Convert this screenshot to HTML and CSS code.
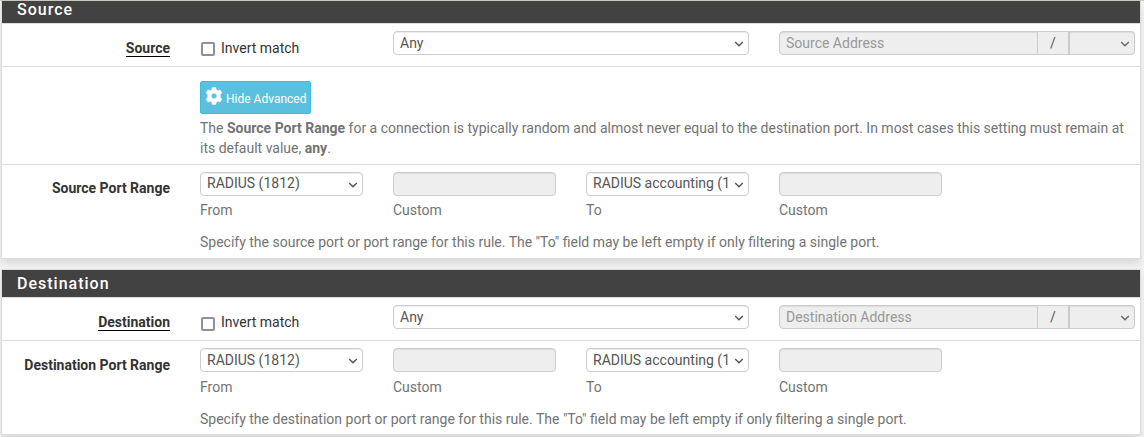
FILE: index.html
```
<!DOCTYPE html>
<html lang="en">
<head>
<meta charset="utf-8">
<title>Firewall rule</title>
<link rel="stylesheet" href="styles.css">
</head>
<body>
<svg class="defs" width="0" height="0"><symbol id="chev" viewBox="0 0 10 8"><path d="M1.2 2 5 5.8 8.8 2" fill="none" stroke="currentColor" stroke-width="1.4"/></symbol></svg>
<main>
<section class="panel source">
  <h2>Source</h2>
  <div class="row match">
    <div class="label"><span class="underlined">Source</span></div>
    <label class="check"><input type="checkbox"><span>Invert match</span></label>
    <div class="control wide"><span>Any</span><svg><use href="#chev"/></svg></div>
    <div class="group">
      <div class="control disabled address"><span>Source Address</span></div>
      <div class="slash">/</div>
      <div class="control disabled mask"><svg><use href="#chev"/></svg></div>
    </div>
  </div>
  <div class="row advanced">
    <div class="full">
      <button class="info"><svg viewBox="0 0 18 18"><path fill="currentColor" fill-rule="evenodd" d="M7.2.5h3.6l.5 2.3 1.5.9 2.3-.8 1.8 3.1-1.7 1.6v2.8l1.7 1.6-1.8 3.1-2.3-.8-1.5.9-.5 2.3H7.2l-.5-2.3-1.5-.9-2.3.8L1.1 12l1.7-1.6V7.6L1.1 6l1.8-3.1 2.3.8 1.5-.9ZM9 6.2a2.8 2.8 0 1 0 0 5.6 2.8 2.8 0 0 0 0-5.6Z" stroke="currentColor" stroke-width=".5" stroke-linejoin="round"/></svg><span>Hide Advanced</span></button>
      <p>The <b>Source Port Range</b> for a connection is typically random and almost never equal to the destination port. In most cases this setting must remain at its default value, <b>any</b>.</p>
    </div>
  </div>
  <div class="row ports">
    <div class="label">Source Port Range</div>
    <div><div class="control raised"><span>RADIUS (1812)</span><svg><use href="#chev"/></svg></div><div class="help">From</div></div>
    <div><div class="control disabled"></div><div class="help">Custom</div></div>
    <div><div class="control raised"><span>RADIUS accounting (1</span><svg><use href="#chev"/></svg></div><div class="help">To</div></div>
    <div><div class="control disabled"></div><div class="help">Custom</div></div>
    <div class="full note">Specify the source port or port range for this rule. The "To" field may be left empty if only filtering a single port.</div>
  </div>
</section>
<section class="panel destination">
  <h2>Destination</h2>
  <div class="row match">
    <div class="label"><span class="underlined">Destination</span></div>
    <label class="check"><input type="checkbox"><span>Invert match</span></label>
    <div class="control wide"><span>Any</span><svg><use href="#chev"/></svg></div>
    <div class="group">
      <div class="control disabled address"><span>Destination Address</span></div>
      <div class="slash">/</div>
      <div class="control disabled mask"><svg><use href="#chev"/></svg></div>
    </div>
  </div>
  <div class="row ports">
    <div class="label">Destination Port Range</div>
    <div><div class="control"><span>RADIUS (1812)</span><svg><use href="#chev"/></svg></div><div class="help">From</div></div>
    <div><div class="control disabled"></div><div class="help">Custom</div></div>
    <div><div class="control"><span>RADIUS accounting (1</span><svg><use href="#chev"/></svg></div><div class="help">To</div></div>
    <div><div class="control disabled"></div><div class="help">Custom</div></div>
    <div class="full note">Specify the destination port or port range for this rule. The "To" field may be left empty if only filtering a single port.</div>
  </div>
</section>
</main>
</body>
</html>
```
FILE: styles.css
```
* { box-sizing: border-box; }
body {
  margin: 0;
  height: 437px;
  overflow: hidden;
  background: #f3f3f3;
  border-top: 1px solid #c9c6bd;
  font: 14px/20px Roboto, sans-serif;
  color: #333;
}
.defs { display: block; }
main { width: 1140px; margin-left: 1px; }
.panel {
  background: #fff;
  border: 1px solid #ddd;
  box-shadow: 0 5px 8px -1px rgba(0, 0, 0, .12);
}
.source { border-top: 0; }
.destination { margin-top: 10px; }
h2 {
  margin: 0;
  padding: 0 15px;
  height: 27px;
  background: #424242;
  color: #fff;
  font-size: 16px;
  line-height: 27px;
  font-weight: 500;
  letter-spacing: 1px;
}
.source h2 { height: 22px; line-height: 17px; }
.row {
  display: grid;
  grid-template-columns: 168px repeat(5, 163px);
  column-gap: 30px;
  align-items: start;
  align-content: start;
  border-top: 1px solid #ddd;
  padding-top: 7px;
}
.match { height: 43px; }
.advanced { height: 98px; padding-top: 14px; }
.ports { height: 94px; }
.label { text-align: right; font-weight: 700; padding-top: 6px; }
.match .label, .destination .label { padding-top: 7px; }
.underlined { display: inline-block; height: 19px; border-bottom: 1px solid #000; }
.check { display: flex; padding: 7px 0 0 1px; gap: 6px; }
.check input {
  appearance: none;
  width: 14px;
  height: 14px;
  margin: 4px 0 0;
  border: 2px solid #8f8f9d;
  border-radius: 2px;
  background: #fff;
}
.destination .check input { margin-top: 5px; }
.control {
  display: flex;
  justify-content: space-between;
  height: 24px;
  padding: 0 6px;
  border: 1px solid #ccc;
  border-radius: 4px;
  box-shadow: inset 0 1px 1px rgba(0, 0, 0, .075);
  background: #fff;
  color: #555;
  line-height: 23px;
  white-space: nowrap;
}
.control svg { flex: none; width: 10px; height: 8px; margin: 8px -2px 0 0; }
.raised span { line-height: 21px; }
.wide, .group { grid-column: span 2; }
.disabled { background: #eee; color: #999; }
.group { display: flex; }
.address { flex: 1; border-radius: 4px 0 0 4px; }
.slash {
  width: 30px;
  height: 24px;
  border: solid #ccc;
  border-width: 1px 0;
  background: #eee;
  color: #555;
  text-align: center;
  line-height: 23px;
}
.mask { width: 67px; justify-content: flex-end; border-left-width: 2px; border-radius: 0 4px 4px 0; color: #666; }
.mask svg { margin-right: -2px; }
.full { grid-column: 2 / -1; color: #737373; }
.info {
  display: flex;
  align-items: center;
  width: 111px;
  height: 33px;
  padding: 2px 4px 0 4px;
  border: 1px solid #46b8da;
  border-radius: 2px;
  background: #5bc0de;
  color: #fff;
  font: 12px/18px Roboto, sans-serif;
  white-space: nowrap;
}
.info svg { flex: none; width: 18px; height: 18px; margin: -5px 3px 0 0; }
p { margin: 4px 0 0; }
.help { margin-top: 5px; color: #737373; line-height: 20px; }
.source .help { margin-top: 4px; }
.note { margin-top: 12px; }
```
